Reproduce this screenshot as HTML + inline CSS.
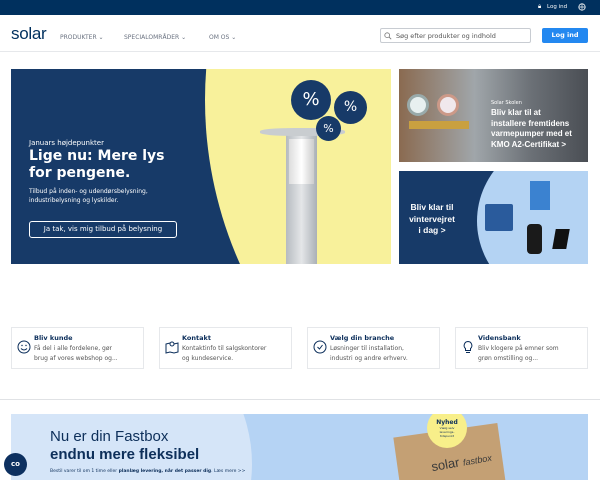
<!DOCTYPE html>
<html><head><meta charset="utf-8"><style>
*{margin:0;padding:0;box-sizing:border-box}
html,body{width:600px;height:480px;overflow:hidden}
body{background:#fff;font-family:"DejaVu Sans","Liberation Sans",sans-serif;position:relative}
.abs{position:absolute}
.top{left:0;top:0;width:600px;height:15px;background:#00305e;color:#fff;font-size:6px}
.nav{font-size:6px;color:#6a7280;top:34px}
.card{top:327px;height:42px;width:133px;border:1px solid #e6e8eb;background:#fff}
.card b{position:absolute;left:22px;top:6px;font-size:6.5px;color:#0a2d5a}
.card p{position:absolute;left:22px;top:16px;font-size:6px;line-height:9.5px;color:#555}
.card svg{position:absolute;left:5px;top:12px}
</style></head><body>
<div class="abs top">
 <span class="abs" style="left:538px;top:3px">🔒︎</span><span class="abs" style="left:547px;top:4px;font-size:5.5px">Log ind</span>
 <svg class="abs" style="left:578px;top:3px" width="8" height="8" viewBox="0 0 10 10"><circle cx="5" cy="5" r="4" fill="none" stroke="#fff"/><path d="M1 5h8M5 1v8" stroke="#fff" stroke-width=".8"/></svg>
</div>
<div class="abs" style="left:11px;top:24px;font-size:17px;color:#00305e;font-family:'Liberation Sans',sans-serif;letter-spacing:-.3px">solar</div>
<div class="abs nav" style="left:60px">PRODUKTER ⌄</div>
<div class="abs nav" style="left:124px">SPECIALOMRÅDER ⌄</div>
<div class="abs nav" style="left:209px">OM OS ⌄</div>
<div class="abs" style="left:380px;top:28px;width:151px;height:15px;border:1px solid #c8ccd2;border-radius:2px;font-size:6.5px;color:#555;padding:3px 0 0 15px">Søg efter produkter og indhold
 <svg class="abs" style="left:3px;top:3px" width="8" height="8" viewBox="0 0 10 10"><circle cx="4" cy="4" r="3" fill="none" stroke="#777"/><path d="M6 6l3 3" stroke="#777"/></svg></div>
<div class="abs" style="left:542px;top:28px;width:46px;height:15px;background:#2388f0;border-radius:2px;color:#fff;font-size:6.5px;font-weight:bold;text-align:center;line-height:15px">Log ind</div>
<div class="abs" style="left:0;top:51px;width:600px;height:1px;background:#e6e8eb"></div>

<div class="abs" style="left:11px;top:69px;width:380px;height:195px;background:#173a68;overflow:hidden">
 <div class="abs" style="left:194px;top:-371px;width:804px;height:804px;border-radius:50%;background:#f8f19b"></div>
 <div class="abs" style="left:275px;top:64px;width:31px;height:132px;background:linear-gradient(90deg,#b6bbc0,#e4e6e8,#aab0b6)"></div>
 <div class="abs" style="left:278px;top:70px;width:25px;height:45px;background:linear-gradient(90deg,#ddd,#fff,#ccc)"></div>
 <div class="abs" style="left:249px;top:59px;width:85px;height:8px;border-radius:40%;background:#c9cdd0"></div>
 <div class="abs" style="left:280px;top:11px;width:40px;height:40px;border-radius:50%;background:#173a68;color:#fff;font-size:18px;text-align:center;line-height:40px">%</div>
 <div class="abs" style="left:323px;top:22px;width:33px;height:33px;border-radius:50%;background:#173a68;color:#fff;font-size:14px;text-align:center;line-height:33px">%</div>
 <div class="abs" style="left:305px;top:47px;width:25px;height:25px;border-radius:50%;background:#173a68;color:#fff;font-size:11px;text-align:center;line-height:25px">%</div>
 <div class="abs" style="left:18px;top:70px;color:#fff;font-size:7px">Januars højdepunkter</div>
 <div class="abs" style="left:18px;top:79px;color:#fff;font-size:14px;font-weight:bold;line-height:17px">Lige nu: Mere lys<br>for pengene.</div>
 <div class="abs" style="left:18px;top:118px;color:#fff;font-size:6px;line-height:9px">Tilbud på inden- og udendørsbelysning,<br>industribelysning og lyskilder.</div>
 <div class="abs" style="left:18px;top:152px;width:148px;height:17px;border:1px solid #fff;border-radius:3px;color:#fff;font-size:7px;text-align:center;line-height:15px">Ja tak, vis mig tilbud på belysning</div>
</div>

<div class="abs" style="left:399px;top:69px;width:189px;height:93px;background:linear-gradient(90deg,#8a6a50,#a0a6aa 40%,#6b7076 70%,#4a4e54);overflow:hidden">
 <div class="abs" style="left:8px;top:25px;width:22px;height:22px;border-radius:50%;background:#e8f0f0;border:3px solid #9aa"></div>
 <div class="abs" style="left:38px;top:25px;width:22px;height:22px;border-radius:50%;background:#f0e8ec;border:3px solid #c98"></div>
 <div class="abs" style="left:10px;top:52px;width:60px;height:8px;background:#c9a040"></div>
 <div class="abs" style="left:92px;top:31px;color:#fff;font-size:5px">Solar Skolen</div>
 <div class="abs" style="left:92px;top:39px;color:#fff;font-size:8px;font-weight:bold;line-height:10.5px;font-family:'Liberation Sans',sans-serif">Bliv klar til at<br>installere fremtidens<br>varmepumper med et<br>KMO A2-Certifikat &gt;</div>
</div>

<div class="abs" style="left:399px;top:171px;width:189px;height:93px;background:#173a68;overflow:hidden">
 <div class="abs" style="left:78px;top:-40px;width:200px;height:180px;border-radius:50%;background:#b4d3f3"></div>
 <div class="abs" style="left:86px;top:33px;width:28px;height:27px;background:#2a5b9c;border-radius:2px"></div>
 <div class="abs" style="left:131px;top:10px;width:20px;height:29px;background:#3b82d0"></div>
 <div class="abs" style="left:128px;top:53px;width:15px;height:30px;background:#1a1a1a;border-radius:4px"></div>
 <div class="abs" style="left:155px;top:58px;width:14px;height:20px;background:#111;transform:skew(-10deg)"></div>
 <div class="abs" style="left:0;top:31px;width:66px;color:#fff;font-size:8.5px;font-weight:bold;text-align:center;line-height:11.5px;font-family:'Liberation Sans',sans-serif">Bliv klar til<br>vintervejret<br>i dag &gt;</div>
</div>

<div class="abs card" style="left:11px"><svg width="14" height="14" viewBox="0 0 14 14"><circle cx="7" cy="7" r="6" fill="none" stroke="#0a2d5a"/><circle cx="5" cy="5.5" r=".7" fill="#0a2d5a"/><circle cx="9" cy="5.5" r=".7" fill="#0a2d5a"/><path d="M4 8.5q3 3 6 0" fill="none" stroke="#0a2d5a"/></svg><b>Bliv kunde</b><p>Få del i alle fordelene, gør<br>brug af vores webshop og...</p></div>
<div class="abs card" style="left:159px"><svg width="14" height="14" viewBox="0 0 14 14"><path d="M1 4l4-1 4 1 4-1v9l-4 1-4-1-4 1z" fill="none" stroke="#0a2d5a"/><circle cx="7" cy="4" r="2" fill="#fff" stroke="#0a2d5a"/></svg><b>Kontakt</b><p>Kontaktinfo til salgskontorer<br>og kundeservice.</p></div>
<div class="abs card" style="left:307px"><svg width="14" height="14" viewBox="0 0 14 14"><circle cx="7" cy="7" r="6" fill="none" stroke="#0a2d5a"/><path d="M4.5 7l2 2 3-4" fill="none" stroke="#0a2d5a"/></svg><b>Vælg din branche</b><p>Løsninger til installation,<br>industri og andre erhverv.</p></div>
<div class="abs card" style="left:455px"><svg width="14" height="14" viewBox="0 0 14 14"><path d="M7 1.5a4 4 0 0 0-2.5 7v2h5v-2A4 4 0 0 0 7 1.5zM5 12.5h4" fill="none" stroke="#0a2d5a"/></svg><b>Vidensbank</b><p>Bliv klogere på emner som<br>grøn omstilling og...</p></div>

<div class="abs" style="left:0;top:399px;width:600px;height:1px;background:#e0e2e5"></div>
<div class="abs" style="left:11px;top:414px;width:577px;height:66px;background:#b5d3f4;overflow:hidden">
 <div class="abs" style="left:-300px;top:-150px;width:541px;height:400px;border-radius:50%;background:#d5e5f8"></div>
 <div class="abs" style="left:39px;top:14px;font-size:15px;color:#0d2f5a;font-family:'Liberation Sans',sans-serif">Nu er din Fastbox</div>
 <div class="abs" style="left:39px;top:32px;font-size:15px;font-weight:bold;color:#0d2f5a;font-family:'Liberation Sans',sans-serif">endnu mere fleksibel</div>
 <div class="abs" style="left:39px;top:55px;font-size:4.5px;color:#0d2f5a">Bestil varer til om 1 time eller <b>planlæg levering, når det passer dig</b>. Læs mere &gt;&gt;</div>
 <div class="abs" style="left:386px;top:16px;width:105px;height:60px;background:#c4a074;transform:rotate(-8deg)"></div>
 <div class="abs" style="left:420px;top:40px;font-size:13px;color:#3a3a3a;transform:rotate(-10deg);font-family:'Liberation Sans',sans-serif">solar <i style="font-size:9px">fastbox</i></div>
 <div class="abs" style="left:416px;top:-6px;width:40px;height:40px;border-radius:50%;background:#f8ef8a;text-align:center;font-size:6px;font-weight:bold;color:#0d2f5a;padding-top:11px">Nyhed<div style="font-size:3px;font-weight:normal">Vælg selv<br>leverings-<br>tidspunkt</div></div>
</div>
<div class="abs" style="left:4px;top:453px;width:23px;height:23px;border-radius:50%;background:#0d3060;color:#fff;font-size:7px;text-align:center;line-height:23px;font-weight:bold">co</div>
</body></html>
